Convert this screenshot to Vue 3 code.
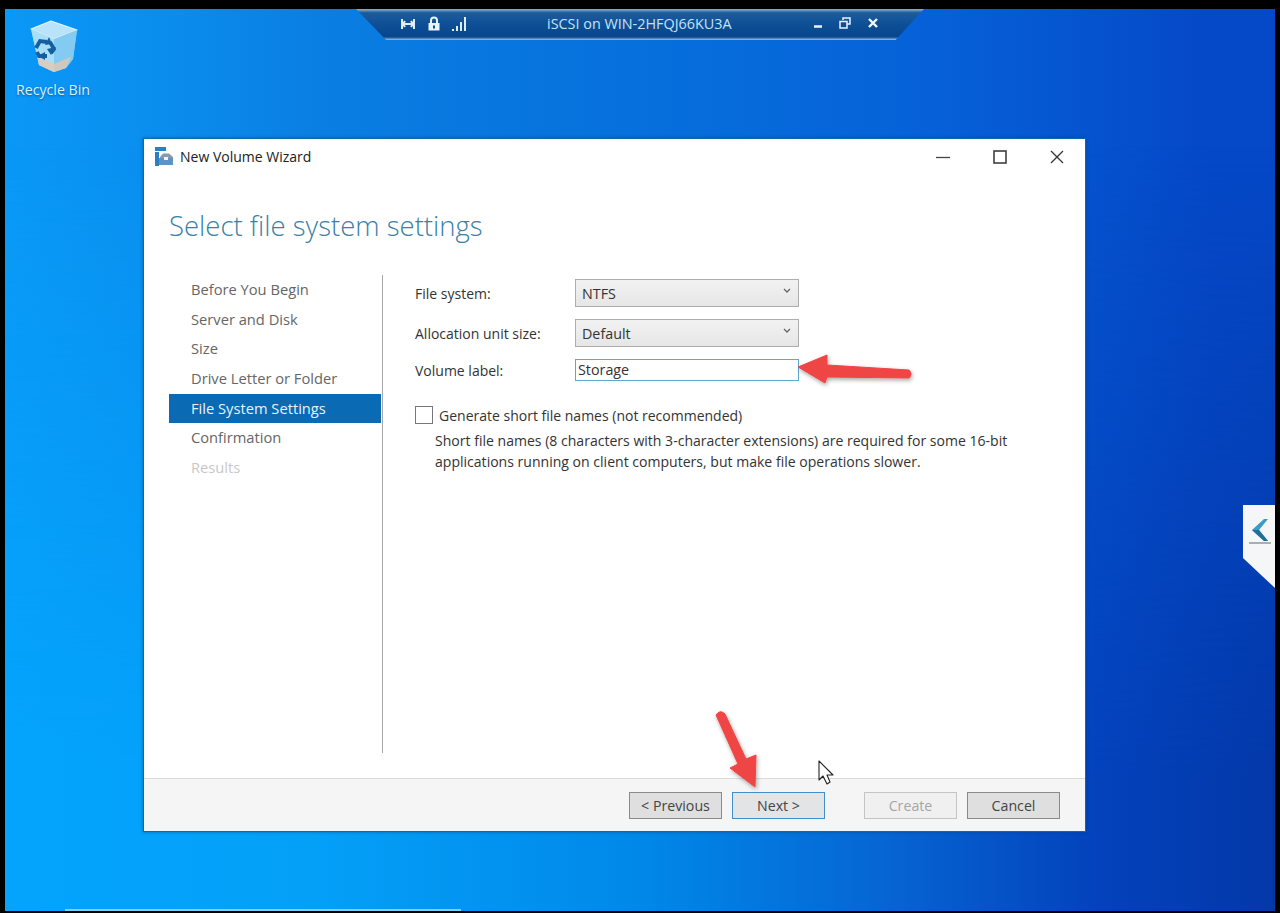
<script setup>
const steps = [
  { label: 'Before You Begin' },
  { label: 'Server and Disk' },
  { label: 'Size' },
  { label: 'Drive Letter or Folder' },
  { label: 'File System Settings', active: true },
  { label: 'Confirmation' },
  { label: 'Results', disabled: true }
]
</script>

<template>
  <div class="screen">
    <div class="desktop">
      <div class="strip"></div>

      <div class="recycle">
        <svg class="bin" width="50" height="54" viewBox="0 0 50 54">
          <path d="M2 9 L22 1 L48 10 L44 39 L37 48 L25 52 L10 45 Z" fill="#8fd0f4" />
          <path d="M2 9 L22 1 L48 10 L25 19 Z" fill="#b8e3fa" stroke="#dff3fd" stroke-width="1.200" stroke-linejoin="round" />
          <path d="M2 9 L25 19 L25 52 L10 45 Z" fill="#a8def8" />
          <path d="M25 19 L48 10 L44 39 L37 48 L25 52 Z" fill="#84cbf2" />
          <path d="M9 37 L25 44 L42 37 L37 48 L25 52 L10 45 Z" fill="#e9c7ae" opacity=".75" />
          <g fill="none" stroke="#155f9e" stroke-width="3.800">
            <path d="M7 28 L11 21 L18 22" />
            <path d="M21 22 L25 29 L22 33" />
            <path d="M18 36 L10 36 L8 32" />
          </g>
          <g fill="#155f9e">
            <path d="M20 17 L16 25 L23 24 Z" />
            <path d="M27 27 L18 29 L22 35 Z" />
            <path d="M16 32 L16 40 L9 36 Z" />
          </g>
        </svg>
        <span class="bin-label">Recycle Bin</span>
      </div>

      <div class="connection">
        <div class="conn-icons">
          <svg width="16" height="12" viewBox="0 0 16 12"><path d="M2 1v10M14 1v10M2 6h12M5 3l-2 3 2 3M11 3l2 3-2 3" fill="none" stroke="#dfeefa" stroke-width="2" /></svg>
          <svg width="14" height="15" viewBox="0 0 14 15"><path d="M4 7V4.500a3 3 0 0 1 6 0V7" fill="none" stroke="#e8f3fb" stroke-width="2" /><rect x="1.500" y="7" width="11" height="7.500" fill="#e8f3fb" /><rect x="6" y="9.500" width="2" height="3" fill="#0b4f8e" /></svg>
          <svg width="15" height="14" viewBox="0 0 15 14"><path d="M1 14v-2M5 14V9M9 14V5M13 14V0" stroke="#dfeefa" stroke-width="2" /></svg>
        </div>
        <span class="conn-title">iSCSI on WIN-2HFQJ66KU3A</span>
        <div class="conn-controls">
          <svg width="10" height="10" viewBox="0 0 10 10"><path d="M1 8.500h8" stroke="#e8f3fb" stroke-width="2.400" /></svg>
          <svg width="12" height="12" viewBox="0 0 12 12"><path d="M4 3V1h7v6H8M1 4.500h7v6.500H1z" fill="none" stroke="#e8f3fb" stroke-width="1.500" /></svg>
          <svg width="12" height="12" viewBox="0 0 12 12"><path d="M2 2l8 8M10 2l-8 8" stroke="#f2f8fd" stroke-width="2.400" /></svg>
        </div>
      </div>

      <div class="side-tab">
        <svg width="24" height="28" viewBox="0 0 24 28">
          <path d="M16 1 L4 12 L16 23 L20 23 L11 12 L20 1 Z" fill="#3d9cc4" />
          <path d="M4 12 L16 23 L20 23 L11 12 Z" fill="#1c7099" />
          <path d="M1 25 H23" stroke="#8a979e" stroke-width="1.500" />
        </svg>
      </div>

      <section class="window">
        <header class="titlebar">
          <div class="title-left">
            <svg width="19" height="19" viewBox="0 0 19 19">
              <path d="M0 0h11v4H0z" fill="#2d7fc1" />
              <path d="M0 5h4v14H0z" fill="#2d7fc1" />
              <path d="M5 10 L8 6.500 H14 L18 10 V18 H5 Z" fill="#8b9aab" />
              <path d="M4 11h14v7H4z" fill="#5f93c4" />
              <path d="M9 10h4v3H9z" fill="#eef4fa" />
            </svg>
            <span>New Volume Wizard</span>
          </div>
          <div class="win-controls">
            <svg width="14" height="14" viewBox="0 0 14 14"><path d="M0 7.500h14" stroke="#444" stroke-width="1.300" /></svg>
            <svg width="14" height="14" viewBox="0 0 14 14"><rect x="1" y="1" width="12" height="12" fill="none" stroke="#333" stroke-width="1.500" /></svg>
            <svg width="14" height="14" viewBox="0 0 14 14"><path d="M1 1l12 12M13 1L1 13" stroke="#333" stroke-width="1.300" /></svg>
          </div>
        </header>

        <h1 class="heading">Select file system settings</h1>

        <div class="body">
          <nav class="steps">
            <div
              v-for="step in steps"
              :key="step.label"
              class="step"
              :class="{ active: step.active, disabled: step.disabled }"
            >{{ step.label }}</div>
          </nav>

          <div class="content">
            <div class="row row-select">
              <label>File system:</label>
              <div class="select"><span>NTFS</span><svg width="8" height="6" viewBox="0 0 8 6"><path d="M1 1l3 3 3-3" fill="none" stroke="#666" stroke-width="1.300" /></svg></div>
            </div>
            <div class="row row-select">
              <label>Allocation unit size:</label>
              <div class="select"><span>Default</span><svg width="8" height="6" viewBox="0 0 8 6"><path d="M1 1l3 3 3-3" fill="none" stroke="#666" stroke-width="1.300" /></svg></div>
            </div>
            <div class="row row-input">
              <label>Volume label:</label>
              <div class="input">Storage</div>
            </div>
            <div class="check-row">
              <span class="checkbox"></span>
              <span>Generate short file names (not recommended)</span>
            </div>
            <p class="hint">Short file names (8 characters with 3-character extensions) are required for some 16-bit<br />applications running on client computers, but make file operations slower.</p>
          </div>
        </div>

        <footer class="footer">
          <div class="btn">&lt; Previous</div>
          <div class="btn focus">Next &gt;</div>
          <div class="btn off">Create</div>
          <div class="btn">Cancel</div>
        </footer>
      </section>

      <svg class="overlay" width="1270" height="904" viewBox="0 0 1270 904">
        <defs>
          <filter id="sh" x="-20%" y="-20%" width="140%" height="140%">
            <feDropShadow dx="1" dy="2" stdDeviation="2" flood-color="#000" flood-opacity=".35" />
          </filter>
        </defs>
        <g filter="url(#sh)" fill="#f04545">
          <path d="M793 358 L822 346 L822 356 L904 361 Q908 365 904 369 L822 368 L820 374 Z" stroke="#f04545" stroke-width="1" stroke-linejoin="round" />
          <path d="M711 706 Q715 700 720 705 L741 750 L751 746 L750 778 L725 759 L733 755 Z" stroke="#f04545" stroke-width="1" stroke-linejoin="round" />
        </g>
        <path d="M814 752 V771 L818 767 L822 775 L825 773 L822 766 L828 766 Z" fill="#fff" stroke="#222" stroke-width="1.100" stroke-linejoin="round" />
      </svg>
    </div>
  </div>
</template>

<style>
html, body { margin: 0; background: #000; }
</style>

<style scoped>
.screen {
  width: 1280px;
  height: 913px;
  background: #000;
  overflow: hidden;
  padding: 9px 5px 2px;
  box-sizing: border-box;
  font-family: "Open Sans", "Noto Sans", sans-serif;
}
.desktop {
  position: relative;
  height: 100%;
  overflow: hidden;
  background: linear-gradient(90deg, #0a98f6 0%, #0a8eee 12%, #0a7ee2 25%, #0670dc 50%, #0660d8 74%, #0548c8 95%, #0548c8 100%);
}
.desktop::before {
  content: "";
  position: absolute;
  inset: 0;
  background: linear-gradient(90deg, #04a4fc 0%, #04a0f8 24%, #0088e8 50%, #0664d2 70%, #0342bc 86%, #0338a8 100%);
  -webkit-mask-image: linear-gradient(180deg, transparent 15%, #000 85%);
  mask-image: linear-gradient(180deg, transparent 15%, #000 85%);
}
.strip {
  position: absolute;
  left: 60px;
  bottom: 0;
  width: 396px;
  height: 2px;
  background: #7fd0f8;
}
.recycle {
  position: absolute;
  left: 8px;
  top: 11px;
  width: 80px;
  display: flex;
  flex-direction: column;
  align-items: center;
  gap: 7px;
}
.bin { margin-left: 1px; }
.bin-label {
  font-size: 14.200px;
  line-height: 18px;
  color: #d8f2ff;
  white-space: nowrap;
  text-shadow: 0 1px 2px rgba(0, 50, 110, .6);
}
.connection {
  position: absolute;
  left: 351px;
  top: 0;
  width: 568px;
  height: 31px;
  box-sizing: border-box;
  clip-path: polygon(0 0, 100% 0, 95% 100%, 5.300% 100%);
  background: linear-gradient(180deg, #8fb3d0 0, #1d5c9c 12%, #0d4f96 50%, #07458c 90%, #9cc0dc 100%);
  display: flex;
  align-items: center;
}
.conn-icons {
  position: absolute;
  left: 44px;
  top: 7px;
  display: flex;
  align-items: center;
  gap: 11px;
}
.conn-title {
  position: absolute;
  left: 191px;
  top: 5px;
  color: #c6e2f6;
  font-size: 14.400px;
  line-height: 20px;
  white-space: nowrap;
}
.conn-controls {
  position: absolute;
  left: 457px;
  top: 8px;
  display: flex;
  align-items: center;
  gap: 16px;
}
.side-tab {
  position: absolute;
  right: 0;
  top: 496px;
  width: 32px;
  height: 83px;
  box-sizing: border-box;
  padding: 13px 0 0 5px;
  background: #f5f6f8;
  clip-path: polygon(0 0, 100% 0, 100% 100%, 0 64%);
}
.window {
  position: absolute;
  left: 138px;
  top: 129px;
  width: 943px;
  height: 694px;
  box-sizing: border-box;
  background: #fff;
  border: 1px solid #0d6aa8;
  box-shadow: 0 0 3px rgba(0, 60, 110, .55);
  display: flex;
  flex-direction: column;
  color: #333;
}
.titlebar {
  height: 35px;
  flex: none;
  display: flex;
  align-items: center;
  justify-content: space-between;
  padding: 0 21px 0 11px;
}
.title-left {
  display: flex;
  align-items: center;
  gap: 6px;
  font-size: 14px;
  color: #222;
}
.win-controls {
  display: flex;
  align-items: center;
  gap: 43px;
}
.heading {
  margin: 0;
  flex: none;
  height: 101px;
  box-sizing: border-box;
  padding: 32px 0 0 25px;
  font-size: 27.500px;
  line-height: 40px;
  font-weight: 300;
  color: #3b7fa5;
}
.body {
  flex: 1;
  display: flex;
  align-items: flex-start;
  min-height: 0;
}
.steps {
  width: 214px;
  height: 478px;
  margin-left: 25px;
  box-sizing: border-box;
  border-right: 1px solid #a8a8a8;
  flex: none;
}
.step {
  width: 212px;
  height: 29.700px;
  line-height: 29.700px;
  padding-left: 22px;
  box-sizing: border-box;
  font-size: 14.700px;
  color: #666;
  white-space: nowrap;
}
.step.active {
  background: #0a6ab3;
  color: #e8f3fb;
}
.step.disabled { color: #c8c8c8; }
.content {
  padding: 4px 0 0 32px;
  flex: 1;
  font-size: 14px;
  color: #333;
}
.row {
  display: flex;
  align-items: center;
}
.row label {
  width: 160px;
  flex: none;
}
.row-select { height: 28px; margin-bottom: 12px; }
.row-input { height: 22px; margin-bottom: 25px; }
.select {
  width: 224px;
  height: 28px;
  box-sizing: border-box;
  border: 1px solid #adadad;
  background: linear-gradient(180deg, #f2f2f2, #e6e6e6);
  padding: 0 7px 0 6px;
  display: flex;
  align-items: center;
  justify-content: space-between;
  font-size: 14.300px;
}
.select svg { margin-top: -5px; }
.input {
  width: 224px;
  height: 22px;
  box-sizing: border-box;
  border: 1px solid #5fa6d3;
  background: #fff;
  padding-left: 2px;
  line-height: 20px;
  font-size: 14.300px;
}
.check-row {
  display: flex;
  align-items: center;
  gap: 6px;
  height: 18px;
  font-size: 14px;
}
.checkbox {
  width: 16px;
  height: 16px;
  border: 1px solid #777;
  background: #fff;
  flex: none;
}
.hint {
  margin: 7px 0 0 20px;
  font-size: 14.050px;
  line-height: 20.500px;
  white-space: nowrap;
}
.footer {
  margin-top: auto;
  flex: none;
  height: 53px;
  box-sizing: border-box;
  background: #f5f5f5;
  border-top: 1px solid #dcdcdc;
  padding: 13px 25px 0 0;
  display: flex;
  justify-content: flex-end;
  align-items: flex-start;
}
.btn {
  width: 93px;
  height: 27px;
  box-sizing: border-box;
  border: 1px solid #8a8a8a;
  background: #dfdfdf;
  text-align: center;
  line-height: 25px;
  font-size: 14.200px;
  color: #444;
  margin-left: 10px;
}
.btn.focus {
  border-color: #3f8fcc;
  background: #e2e4e6;
  margin-right: 29px;
}
.btn.off {
  border-color: #c4c4c4;
  background: #f0f0f0;
  color: #a6a6a6;
}
.overlay {
  position: absolute;
  left: 0;
  top: 0;
  pointer-events: none;
}
</style>
